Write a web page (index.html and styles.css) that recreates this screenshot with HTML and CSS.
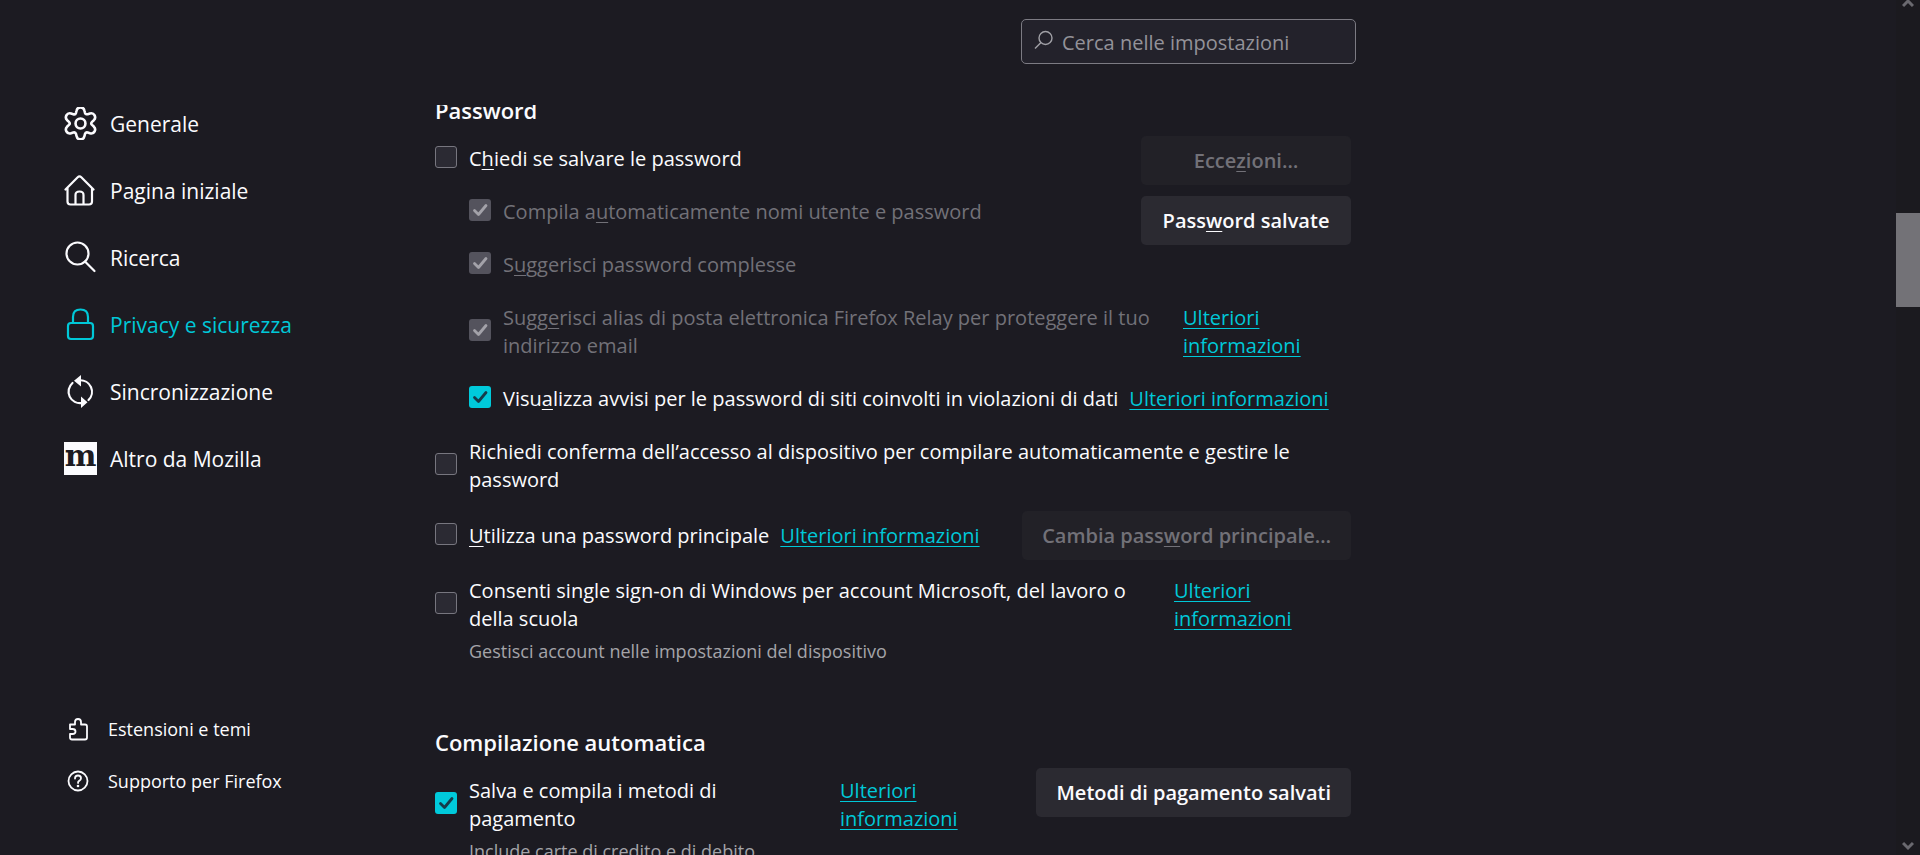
FILE: index.html
```
<!DOCTYPE html>
<html lang="it">
<head>
    <meta charset="UTF-8">
    <title>Impostazioni</title>
    <link rel="stylesheet" href="styles.css">
</head>

<body>
<div class="sidebar">
    <nav class="categories">
        <a class="category" href="#generale">
            <svg class="icon" viewBox="2.500 1.700 28 28"><path d="M13.200 4.700c.4-1.700 1.600-2.700 3.300-2.700s2.900 1 3.300 2.700l.5 1.900c.3 1 1.300 1.500 2.300 1.200l1.900-.6c1.600-.5 3.100.1 3.900 1.500s.6 3-.600 4.200l-1.500 1.400c-.8.8-.8 1.800 0 2.600l1.500 1.400c1.200 1.200 1.400 2.800.6 4.200s-2.300 2-3.900 1.500l-1.900-.6c-1-.3-2 .2-2.300 1.200l-.5 1.900c-.4 1.700-1.600 2.700-3.300 2.700s-2.900-1-3.300-2.700l-.5-1.900c-.3-1-1.300-1.500-2.300-1.200l-1.900.6c-1.600.5-3.100-.1-3.900-1.500s-.6-3 .6-4.200l1.500-1.400c.8-.8.8-1.800 0-2.600l-1.500-1.400c-1.200-1.200-1.400-2.800-.6-4.200s2.300-2 3.900-1.500l1.900.6c1 .3 2-.2 2.300-1.200z"/><circle cx="16.500" cy="15.700" r="4.200"/></svg>
            <span>Generale</span>
        </a>
        <a class="category" href="#home">
            <svg class="icon" viewBox="0 0 33 33"><path d="M1.500 15.500 13.700 3.300q1.800-1.800 3.600 0L29.500 15.500M3.500 14v13.500q0 3 3 3H25q3 0 3-3V14M11.500 30v-9q0-3.500 4-3.500t4 3.500v9"/></svg>
            <span>Pagina iniziale</span>
        </a>
        <a class="category" href="#ricerca">
            <svg class="icon" viewBox="0 0 33 33"><circle cx="13.500" cy="12.500" r="11"/><path d="m21 20.500 9.500 9.500"/></svg>
            <span>Ricerca</span>
        </a>
        <a class="category selected" href="#privacy">
            <svg class="icon" viewBox="0 0 33 33"><rect x="4" y="15" width="25" height="16" rx="3"/><path d="M9 15V9q0-7.500 7.500-7.500T24 9v6"/></svg>
            <span>Privacy e sicurezza</span>
        </a>
        <a class="category" href="#sync">
            <svg class="icon" viewBox="0 0 33 33"><path d="M8.500 8A11.500 11.500 0 0 0 18 28M24.500 25A11.500 11.500 0 0 0 15.500 5.300"/><path class="fill" d="M17 0v11.500L10 5.800zM17 33V21.500l6.500 5.700z"/></svg>
            <span>Sincronizzazione</span>
        </a>
        <a class="category" href="#mozilla">
            <span class="mozilla">m</span>
            <span>Altro da Mozilla</span>
        </a>
    </nav>
    <div class="links">
        <a class="small-link" href="#addons">
            <svg class="icon small" viewBox="0 0 24 24"><path d="M3 7.500h5V5q0-3 3-3t3 3v2.500h4q2 0 2 2v11q0 2-2 2H5q-2 0-2-2V17h2.500q3 0 3-2.500T5.500 12H3z"/></svg>
            <span>Estensioni e temi</span>
        </a>
        <a class="small-link" href="#support">
            <svg class="icon small" viewBox="0 0 24 24"><circle cx="11" cy="12" r="9.500"/><path d="M8 9.500q0-3 3-3t3 2.700q0 1.500-1.600 2.400T11 14"/><circle class="fill" cx="11" cy="17" r="1.300"/></svg>
            <span>Supporto per Firefox</span>
        </a>
    </div>
</div>

<div class="main">
    <div class="search-row">
        <div class="search">
            <svg class="search-icon" viewBox="0 0 20 20"><circle cx="11.500" cy="8" r="6.500"/><path d="m7 12.500-6 6"/></svg>
            <input type="text" aria-label="Cerca nelle impostazioni" placeholder="Cerca nelle impostazioni">
        </div>
    </div>
    <div class="pane">
        <section class="group passwords">
            <h2>Password</h2>
            <div class="top">
                <div class="checks">
                    <label class="check"><input type="checkbox"><span>C<u>h</u>iedi se salvare le password</span></label>
                    <label class="check indent off"><input type="checkbox" checked disabled><span>Compila a<u>u</u>tomaticamente nomi utente e password</span></label>
                    <label class="check indent off"><input type="checkbox" checked disabled><span>S<u>u</u>ggerisci password complesse</span></label>
                </div>
                <div class="buttons">
                    <button disabled>Ecce<u>z</u>ioni…</button>
                    <button>Pass<u>w</u>ord salvate</button>
                </div>
            </div>
            <div class="row indent">
                <label class="check relay off"><input type="checkbox" checked disabled><span>Sugg<u>e</u>risci alias di posta elettronica Firefox Relay per proteggere il tuo indirizzo email</span></label>
                <a class="more narrow" href="#relay">Ulteriori informazioni</a>
            </div>
            <div class="row indent">
                <label class="check"><input type="checkbox" checked><span>Visu<u>a</u>lizza avvisi per le password di siti coinvolti in violazioni di dati</span></label>
                <a class="more" href="#avvisi">Ulteriori informazioni</a>
            </div>
            <div class="row">
                <label class="check confirm"><input type="checkbox"><span>Richiedi conferma dell’accesso al dispositivo per compilare automaticamente e gestire le password</span></label>
            </div>
            <div class="row with-button">
                <label class="check"><input type="checkbox"><span><u>U</u>tilizza una password principale</span></label>
                <a class="more" href="#principale">Ulteriori informazioni</a>
                <button disabled>Cambia pass<u>w</u>ord principale…</button>
            </div>
            <div class="row">
                <label class="check sso"><input type="checkbox"><span>Consenti single sign-on di Windows per account Microsoft, del lavoro o della scuola</span></label>
                <a class="more narrow" href="#sso">Ulteriori informazioni</a>
            </div>
            <p class="description">Gestisci account nelle impostazioni del dispositivo</p>
        </section>

        <section class="group">
            <h2>Compilazione automatica</h2>
            <div class="top">
                <div class="checks">
                    <div class="row">
                        <label class="check payment"><input type="checkbox" checked><span>Salva e compila i metodi di pagamento</span></label>
                        <a class="more narrow" href="#pagamento">Ulteriori informazioni</a>
                    </div>
                    <p class="description">Include carte di credito e di debito</p>
                </div>
                <div class="buttons">
                    <button>Metodi di pagamento salvati</button>
                </div>
            </div>
        </section>
    </div>
</div>

<div class="scrollbar">
    <svg class="arrow" viewBox="0 0 12 12"><path d="m1 10 5-5 5 5"/></svg>
    <div class="thumb"></div>
    <svg class="arrow down" viewBox="0 0 12 12"><path d="m1 2 5 5 5-5"/></svg>
</div>
</body>
</html>
```
FILE: styles.css
```
* {
    box-sizing: border-box;
}
body {
    margin: 0;
    height: 100vh;
    display: flex;
    overflow: hidden;
    background: #1c1b22;
    color: #fbfbfe;
    font-family: "Open Sans", "Noto Sans", sans-serif;
    font-size: 20px;
    line-height: 28px;
}
a {
    color: inherit;
    text-decoration: none;
}
u {
    text-underline-offset: 3px;
    text-decoration-thickness: 1px;
    text-decoration-skip-ink: none;
}

/* sidebar */
.sidebar {
    flex: 0 0 435px;
    display: flex;
    flex-direction: column;
    justify-content: space-between;
    padding: 90px 0 48px 64px;
}
.category, .small-link {
    display: flex;
    align-items: center;
    height: 67px;
    gap: 13px;
    font-size: 21px;
}
.small-link {
    height: 52px;
    padding-left: 3px;
    gap: 17px;
    font-size: 18px;
}
.icon {
    width: 33px;
    height: 33px;
    fill: none;
    stroke: currentColor;
    stroke-width: 2.2;
    stroke-linecap: round;
    stroke-linejoin: round;
}
.icon.small {
    width: 24px;
    height: 24px;
    stroke-width: 1.8;
}
.fill {
    fill: currentColor;
    stroke: none;
}
.selected {
    color: #00c8d8;
}
.mozilla {
    width: 33px;
    height: 33px;
    background: #fbfbfe;
    color: #1c1b22;
    font: bold 30px/28px "DejaVu Serif", serif;
    text-align: center;
}

/* content */
.main {
    flex: 0 1 921px;
    display: flex;
    flex-direction: column;
    min-width: 0;
}
.search-row {
    flex: none;
    display: flex;
    justify-content: flex-end;
    height: 105px;
    padding-top: 19px;
}
.search {
    display: flex;
    align-items: center;
    width: 335px;
    height: 45px;
    padding: 0 12px;
    gap: 8px;
    background: #23222b;
    border: 1px solid #7c7b83;
    border-radius: 5px;
}
.search-icon {
    flex: none;
    width: 20px;
    height: 20px;
    margin-bottom: 4px;
    fill: none;
    stroke: #a0a0a6;
    stroke-width: 1.4;
}
.search input {
    flex: 1;
    min-width: 0;
    padding: 2px 0 0;
    border: 0;
    outline: none;
    background: none;
    color: inherit;
    font: inherit;
}
.search input::placeholder {
    color: #939299;
    opacity: 1;
}
.pane {
    flex: 1;
    min-height: 0;
    overflow: hidden;
    padding-right: 5px;
}
.group {
    margin-bottom: 63px;
}
/* scrolled under the search row */
.passwords {
    margin-top: -9px;
}
h2 {
    margin: 0 0 12px;
    font-size: 22px;
    font-weight: 600;
    line-height: 28px;
}
.top {
    display: flex;
    justify-content: space-between;
}
.checks {
    display: flex;
    flex-direction: column;
    padding-top: 9px;
}
.checks .check + .check, .row {
    margin-top: 25px;
}
.checks .row {
    margin-top: 0;
}
.row {
    display: flex;
    align-items: center;
    gap: 11px;
}
.check {
    display: flex;
    align-items: center;
    gap: 12px;
}
.indent {
    padding-left: 34px;
}
.check input {
    flex: none;
    appearance: none;
    width: 22px;
    height: 22px;
    margin: 0 0 4px;
    background: #2b2a33;
    border: 1px solid #77767f;
    border-radius: 3px;
}
.check input:checked {
    background: #00cadb url("data:image/svg+xml,%3Csvg xmlns='http://www.w3.org/2000/svg' viewBox='0 0 22 22'%3E%3Cpath d='M5.500 11.500 9.500 15.500 17 6.500' fill='none' stroke='%23153c4a' stroke-width='2.800' stroke-linecap='round' stroke-linejoin='round'/%3E%3C/svg%3E") center / 22px;
    border: 0;
}
.check input:disabled {
    background: #54535d url("data:image/svg+xml,%3Csvg xmlns='http://www.w3.org/2000/svg' viewBox='0 0 22 22'%3E%3Cpath d='M5.500 11.500 9.500 15.500 17 6.500' fill='none' stroke='%23a3a2a9' stroke-width='2.800' stroke-linecap='round' stroke-linejoin='round'/%3E%3C/svg%3E") center / 22px;
}
.off {
    color: #727178;
}
.relay {
    flex: 0 1 703px;
}
.confirm {
    flex: 0 1 860px;
}
.sso {
    flex: 0 1 728px;
}
.payment {
    flex: 0 0 394px;
    padding-right: 40px;
}
.more {
    color: #00c8d8;
    text-decoration: underline;
    text-decoration-thickness: 1px;
    text-underline-offset: 3px;
    text-decoration-skip-ink: none;
}
.narrow {
    width: 130px;
}
.buttons {
    display: flex;
    flex-direction: column;
    gap: 11px;
}
button {
    height: 49px;
    padding: 0 20px;
    border: 0;
    border-radius: 5px;
    background: #2b2a31;
    color: #fbfbfe;
    font: inherit;
    font-weight: 600;
    white-space: nowrap;
}
.passwords .buttons {
    width: 210px;
}
button:disabled {
    background: #222127;
    color: #727178;
}
.with-button {
    margin: 17px 0 -8px;
}
.with-button button {
    margin-left: auto;
}
.description {
    margin: 4px 0 0 34px;
    color: #a4a4a9;
    font-size: 18px;
}

/* scrollbar */
.scrollbar {
    flex: 0 0 24px;
    display: flex;
    flex-direction: column;
    align-items: center;
    margin-left: auto;
    background: #1b1a1f;
}
.arrow {
    width: 12px;
    height: 12px;
    margin-top: -4px;
    fill: none;
    stroke: #6a696f;
    stroke-width: 3;
}
.thumb {
    width: 100%;
    height: 11vh;
    margin-top: 24vh;
    background: #737277;
}
.down {
    margin: auto 0 2px;
}
```
